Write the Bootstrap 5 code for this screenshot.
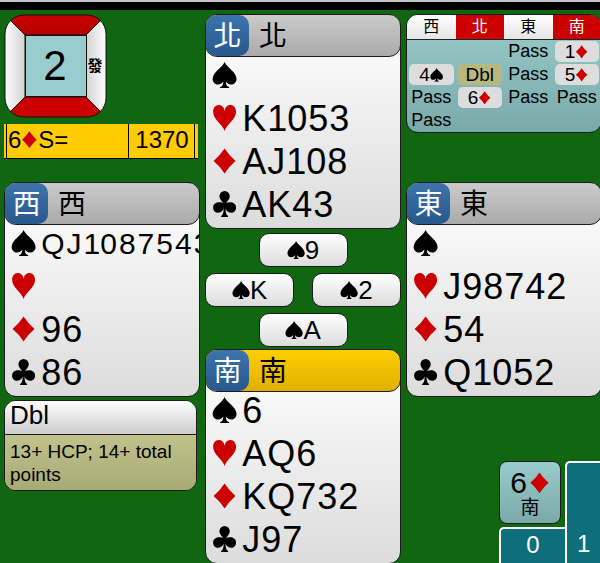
<!DOCTYPE html>
<html lang="zh-Hant">
<head>
<meta charset="utf-8">
<meta name="viewport" content="width=device-width, initial-scale=1">
<title>Bridge table</title>
<link href="https://cdn.jsdelivr.net/npm/bootstrap@5.3.0/dist/css/bootstrap.min.css" rel="stylesheet">
<style>
body { font-family: "Liberation Sans", "Noto Sans CJK TC", sans-serif; background: #116611; color: #000; overflow: hidden; line-height: 1; }
.topbar { height: 10px; background: #000; border-top: 2px solid #c4c8cc; }
.felt { display: grid; grid-template-columns: repeat(3, minmax(0, 1fr)); column-gap: 5px; padding: 4px 0 0 4px; margin-right: -2px; }
.suit { width: .7em; height: .72em; fill: currentColor; vertical-align: -1px; }
.red { color: #c00; }
.panel { border: 1px solid #1c1c1c; border-radius: 12px; background: linear-gradient(#fff, #dcdcdc); overflow: hidden; }
.seat { height: 43px; margin: -1px -1px 0; border: 1px solid #1c1c1c; border-radius: 12px; background: linear-gradient(#cbcbcb, #aaa); font-size: 28px; overflow: hidden; }
.seat.turn { background: linear-gradient(#ffce00, #e0b000); }
.wind { width: 43px; padding-top: 2px; background: linear-gradient(#3c74ac, #28588c); color: #fff; border-radius: 10px; }
.who { padding: 2px 0 0 10px; }
.suits { padding-left: 6px; }
.suitrow { height: 43px; line-height: 38px; font-size: 36px; }
.suitrow:last-child { height: 42px; }
.suitrow .suit { margin: 5px 5px 0 0; flex-shrink: 0; }
.cards { gap: 1px; }
.cards.tight { font-size: 30px; gap: 2px; }
.board { width: 103px; height: 104px; }
.score { height: 35px; margin: 6px 2px 23px 0; padding: 0 3px 0 2px; background: #fc0; border-bottom: 1px solid #000; font-size: 24px; }
.score td { border-left: 1px solid #000; padding: 0 0 3px 1px; }
.score td:last-child { width: 66px; border-right: 1px solid #000; }
.trick { width: 89px; height: 34px; font-size: 26px; border-radius: 10px; }
.tricks { padding: 4px 0 2px; gap: 6px; }
.note { margin: 3px 3px 0 0; }
.notehead { height: 34px; border-bottom: 1px solid #1c1c1c; padding: 0 5px; font-size: 26px; line-height: 28px; background: linear-gradient(#fff, #ccc); }
.notebody { height: 55px; padding: 5px 5px; font-size: 19px; line-height: 23px; background: linear-gradient(#c2c28c, #a9a976); }
.auction { height: 119px; margin-bottom: 49px; background: linear-gradient(#9cc, #7aa9a9); }
.auction table { table-layout: fixed; font-size: 19px; text-align: center; }
.auction th { height: 24px; font-size: 16px; font-weight: 400; background: linear-gradient(#fff, #e4e4e4); border-bottom: 1px solid #222; padding: 1px 0 0; }
.auction th.vul { background: #c00; color: #fff; }
.auction td { height: 23px; padding: 1px 2px; }
.call { display: block; height: 21px; line-height: 21px; border-radius: 5px; }
.passed { font-size: 18px; line-height: 20px; }
.bid { background: #ddd; }
.dbl { background: #b8b87e; }
.summary { margin-top: 64px; padding-left: 93px; height: 103px; }
.contract { height: 63px; margin-right: 4px; border: 1px solid #1c1c1c; border-radius: 8px; background: linear-gradient(#9cc, #7aa9a9); font-size: 30px; }
.contract small { font-size: 19px; }
.contract .suit { margin-left: 2px; }
.tally { border: 2px solid #fff; border-width: 2px 0 0 2px; border-radius: 5px 0 0 0; background: #0f6e7c; color: #fff; font-size: 24px; }
.won { width: 66px; height: 37px; padding-bottom: 3px; }
.lost { padding: 0 0 8px 10px; }
</style>
<script src="https://cdn.jsdelivr.net/npm/bootstrap@5.3.0/dist/js/bootstrap.bundle.min.js"></script>
</head>
<body>
<svg class="d-none" aria-hidden="true">
  <symbol id="s" viewBox="0 0 25 26"><path d="M12.500 0C14 5 24.500 10 24.500 17C24.500 23 17 24.500 13.800 19.500C14 23 14.500 24.500 17 25V26H8V25C10.500 24.500 11 23 11.200 19.500C8 24.500 .5 23 .5 17C.5 10 11 5 12.500 0Z"/></symbol>
  <symbol id="h" viewBox="0 0 25 26"><path d="M12.500 26C11 20 1 14.500 1 7C1 3 3.200 0 6.600 0C10 0 12 2.500 12.500 6C13 2.500 15 0 18.400 0C21.800 0 24 3 24 7C24 14.500 14 20 12.500 26Z"/></symbol>
  <symbol id="d" viewBox="0 0 25 26"><path d="M12.500 .5Q17.500 8 23.500 13Q17.500 18 12.500 25.500Q7.500 18 1.500 13Q7.500 8 12.500 .5Z"/></symbol>
  <symbol id="c" viewBox="0 0 25 26"><path d="M12.500 0A5.200 5.200 0 0 1 17.700 5.200C17.700 7.500 16 9.500 14 12C17 10.500 24 10.500 24 16.500C24 23.500 15.500 23.500 13.500 17.500C13.500 21.500 14 24 16 25V26H9V25C11 24 11.500 21.500 11.500 17.500C9.500 23.500 1 23.500 1 16.500C1 10.500 8 10.500 11 12C9 9.500 7.300 7.500 7.300 5.200A5.200 5.200 0 0 1 12.500 0Z"/></symbol>
</svg>
<header class="topbar"></header>
<main class="felt">
  <div>
    <svg class="board d-block" viewBox="0 0 103 104" role="img" aria-label="Board 2">
      <defs>
        <clipPath id="round"><rect x="1" y="1" width="101" height="102" rx="19"/></clipPath>
        <linearGradient id="wl"><stop stop-color="#fff"/><stop offset="1" stop-color="#d2d2d2"/></linearGradient>
        <linearGradient id="wr"><stop stop-color="#d2d2d2"/><stop offset="1" stop-color="#fff"/></linearGradient>
        <linearGradient id="rt" x2="0" y2="1"><stop stop-color="#c80000"/><stop offset="1" stop-color="#b80000"/></linearGradient>
      </defs>
      <g clip-path="url(#round)" stroke="#111">
        <path d="M0 0L21 21V83L0 104Z" fill="url(#wl)"/>
        <path d="M103 0L82 21V83L103 104Z" fill="url(#wr)"/>
        <path d="M0 0H103L82 21H21Z" fill="url(#rt)"/>
        <path d="M0 104H103L82 83H21Z" fill="#c00"/>
        <rect x="21.500" y="21.500" width="61" height="61" fill="#9cc"/>
      </g>
      <rect x="1" y="1" width="101" height="102" rx="19" fill="none" stroke="#111"/>
      <text x="51" y="66" font-size="42" text-anchor="middle">2</text>
      <text x="91" y="57" font-size="15" font-weight="700" text-anchor="middle">發</text>
    </svg>
    <div class="score d-flex">
      <table class="w-100">
        <tr><td>6<svg class="suit red" role="img" aria-label="diamonds"><use href="#d"/></svg>S=</td><td class="text-center">1370</td></tr>
      </table>
    </div>
    <section class="panel">
      <div class="seat d-flex"><span class="wind d-flex align-items-center justify-content-center">西</span><span class="who align-self-center">西</span></div>
      <div class="suits">
        <div class="suitrow d-flex"><svg class="suit" role="img" aria-label="spades"><use href="#s"/></svg><span class="cards tight d-flex"><span>Q</span><span>J</span><span>10</span><span>8</span><span>7</span><span>5</span><span>4</span><span>3</span></span></div>
        <div class="suitrow d-flex"><svg class="suit red" role="img" aria-label="hearts"><use href="#h"/></svg></div>
        <div class="suitrow d-flex"><svg class="suit red" role="img" aria-label="diamonds"><use href="#d"/></svg><span class="cards d-flex"><span>9</span><span>6</span></span></div>
        <div class="suitrow d-flex"><svg class="suit" role="img" aria-label="clubs"><use href="#c"/></svg><span class="cards d-flex"><span>8</span><span>6</span></span></div>
      </div>
    </section>
    <section class="panel note">
      <div class="notehead">Dbl</div>
      <div class="notebody">13+ HCP; 14+ total points</div>
    </section>
  </div>

  <div>
    <section class="panel">
      <div class="seat d-flex"><span class="wind d-flex align-items-center justify-content-center">北</span><span class="who align-self-center">北</span></div>
      <div class="suits">
        <div class="suitrow d-flex"><svg class="suit" role="img" aria-label="spades"><use href="#s"/></svg></div>
        <div class="suitrow d-flex"><svg class="suit red" role="img" aria-label="hearts"><use href="#h"/></svg><span class="cards d-flex"><span>K</span><span>10</span><span>5</span><span>3</span></span></div>
        <div class="suitrow d-flex"><svg class="suit red" role="img" aria-label="diamonds"><use href="#d"/></svg><span class="cards d-flex"><span>A</span><span>J</span><span>10</span><span>8</span></span></div>
        <div class="suitrow d-flex"><svg class="suit" role="img" aria-label="clubs"><use href="#c"/></svg><span class="cards d-flex"><span>A</span><span>K</span><span>4</span><span>3</span></span></div>
      </div>
    </section>
    <section class="tricks d-flex flex-column align-items-center">
      <div class="panel trick d-flex align-items-center justify-content-center"><svg class="suit" role="img" aria-label="spades"><use href="#s"/></svg>9</div>
      <div class="w-100 d-flex justify-content-between">
        <div class="panel trick d-flex align-items-center justify-content-center"><svg class="suit" role="img" aria-label="spades"><use href="#s"/></svg>K</div>
        <div class="panel trick d-flex align-items-center justify-content-center"><svg class="suit" role="img" aria-label="spades"><use href="#s"/></svg>2</div>
      </div>
      <div class="panel trick d-flex align-items-center justify-content-center"><svg class="suit" role="img" aria-label="spades"><use href="#s"/></svg>A</div>
    </section>
    <section class="panel">
      <div class="seat turn d-flex"><span class="wind d-flex align-items-center justify-content-center">南</span><span class="who align-self-center">南</span></div>
      <div class="suits">
        <div class="suitrow d-flex"><svg class="suit" role="img" aria-label="spades"><use href="#s"/></svg><span class="cards d-flex"><span>6</span></span></div>
        <div class="suitrow d-flex"><svg class="suit red" role="img" aria-label="hearts"><use href="#h"/></svg><span class="cards d-flex"><span>A</span><span>Q</span><span>6</span></span></div>
        <div class="suitrow d-flex"><svg class="suit red" role="img" aria-label="diamonds"><use href="#d"/></svg><span class="cards d-flex"><span>K</span><span>Q</span><span>7</span><span>3</span><span>2</span></span></div>
        <div class="suitrow d-flex"><svg class="suit" role="img" aria-label="clubs"><use href="#c"/></svg><span class="cards d-flex"><span>J</span><span>9</span><span>7</span></span></div>
      </div>
    </section>
  </div>

  <div>
    <section class="panel auction">
      <table class="w-100">
        <thead><tr><th scope="col">西</th><th scope="col" class="vul">北</th><th scope="col">東</th><th scope="col" class="vul">南</th></tr></thead>
        <tbody>
          <tr><td></td><td></td><td><span class="call passed">Pass</span></td><td><span class="call bid">1<svg class="suit red" role="img" aria-label="diamonds"><use href="#d"/></svg></span></td></tr>
          <tr><td><span class="call bid">4<svg class="suit" role="img" aria-label="spades"><use href="#s"/></svg></span></td><td><span class="call dbl">Dbl</span></td><td><span class="call passed">Pass</span></td><td><span class="call bid">5<svg class="suit red" role="img" aria-label="diamonds"><use href="#d"/></svg></span></td></tr>
          <tr><td><span class="call passed">Pass</span></td><td><span class="call bid">6<svg class="suit red" role="img" aria-label="diamonds"><use href="#d"/></svg></span></td><td><span class="call passed">Pass</span></td><td><span class="call passed">Pass</span></td></tr>
          <tr><td><span class="call passed">Pass</span></td><td></td><td></td><td></td></tr>
        </tbody>
      </table>
    </section>
    <section class="panel">
      <div class="seat d-flex"><span class="wind d-flex align-items-center justify-content-center">東</span><span class="who align-self-center">東</span></div>
      <div class="suits">
        <div class="suitrow d-flex"><svg class="suit" role="img" aria-label="spades"><use href="#s"/></svg></div>
        <div class="suitrow d-flex"><svg class="suit red" role="img" aria-label="hearts"><use href="#h"/></svg><span class="cards d-flex"><span>J</span><span>9</span><span>8</span><span>7</span><span>4</span><span>2</span></span></div>
        <div class="suitrow d-flex"><svg class="suit red" role="img" aria-label="diamonds"><use href="#d"/></svg><span class="cards d-flex"><span>5</span><span>4</span></span></div>
        <div class="suitrow d-flex"><svg class="suit" role="img" aria-label="clubs"><use href="#c"/></svg><span class="cards d-flex"><span>Q</span><span>10</span><span>5</span><span>2</span></span></div>
      </div>
    </section>
    <section class="summary d-flex">
      <div class="d-flex flex-column justify-content-between">
        <div class="contract d-flex flex-column align-items-center justify-content-center"><span>6<svg class="suit red" role="img" aria-label="diamonds"><use href="#d"/></svg></span><small>南</small></div>
        <div class="tally won d-flex align-items-center justify-content-center">0</div>
      </div>
      <div class="tally lost flex-fill d-flex align-items-end">1</div>
    </section>
  </div>
</main>
</body>
</html>
